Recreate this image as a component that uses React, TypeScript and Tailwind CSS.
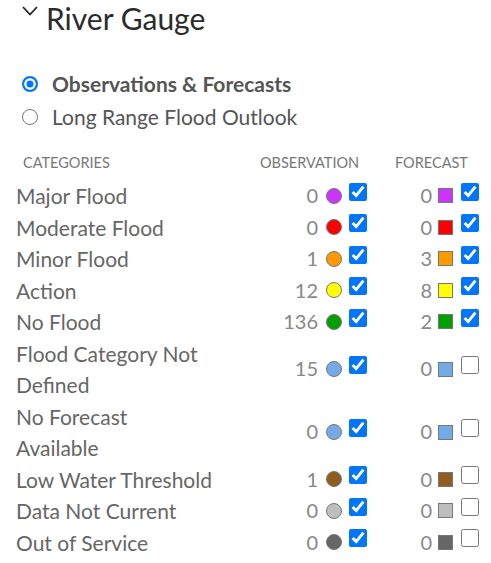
interface Category {
  name: string[];
  obsCount: number;
  fcstCount: number;
  color: string;
  obsOn: boolean;
  fcstOn: boolean;
}

const categories: Category[] = [
  { name: ['Major Flood'], obsCount: 0, fcstCount: 0, color: 'bg-[#cc33ff]', obsOn: true, fcstOn: true },
  { name: ['Moderate Flood'], obsCount: 0, fcstCount: 0, color: 'bg-[#ff0000]', obsOn: true, fcstOn: true },
  { name: ['Minor Flood'], obsCount: 1, fcstCount: 3, color: 'bg-[#ff9900]', obsOn: true, fcstOn: true },
  { name: ['Action'], obsCount: 12, fcstCount: 8, color: 'bg-[#ffff00]', obsOn: true, fcstOn: true },
  { name: ['No Flood'], obsCount: 136, fcstCount: 2, color: 'bg-[#00a000]', obsOn: true, fcstOn: true },
  { name: ['Flood Category Not', 'Defined'], obsCount: 15, fcstCount: 0, color: 'bg-[#72abe8]', obsOn: true, fcstOn: false },
  { name: ['No Forecast', 'Available'], obsCount: 0, fcstCount: 0, color: 'bg-[#72abe8]', obsOn: true, fcstOn: false },
  { name: ['Low Water Threshold'], obsCount: 1, fcstCount: 0, color: 'bg-[#8f5e1e]', obsOn: true, fcstOn: false },
  { name: ['Data Not Current'], obsCount: 0, fcstCount: 0, color: 'bg-[#bdbfbc]', obsOn: true, fcstOn: false },
  { name: ['Out of Service'], obsCount: 0, fcstCount: 0, color: 'bg-[#666666]', obsOn: true, fcstOn: false },
];

const radioClass =
  'm-0 h-[16px] w-[16px] appearance-none rounded-full border-[1.5px] border-[#767676] bg-white checked:border-2 checked:border-[#0075ff] checked:bg-[#0075ff] checked:shadow-[inset_0_0_0_2.5px_white]';

export default function App() {
  return (
    <div className="w-[491px] min-h-[563px] bg-white text-[#666] font-['Lato','Liberation_Sans',sans-serif]">
      {/* Title */}
      <div className="flex h-[36px] items-center pl-[21px]">
        <svg width="18" height="12" viewBox="0 0 18 12" className="mb-[14px] mr-[7px]">
          <polyline points="2,2 9,9.5 16,2" fill="none" stroke="#222" strokeWidth="1.8" />
        </svg>
        <h2 className="text-[30px] leading-[36px] text-[#2b2b2b]">River Gauge</h2>
      </div>

      {/* View selector */}
      <div className="mt-[31px] flex flex-col pl-[22px]">
        <label className="flex h-[33px] items-center gap-[14px]">
          <input type="radio" name="view" defaultChecked className={radioClass} />
          <span className="text-[21px] font-bold text-[#555]">Observations &amp; Forecasts</span>
        </label>
        <label className="flex h-[33px] items-center gap-[14px]">
          <input type="radio" name="view" className={radioClass} />
          <span className="text-[21px] text-[#555]">Long Range Flood Outlook</span>
        </label>
      </div>

      {/* Category table */}
      <div className="mt-[12px] pl-[16px]">
        <div className="flex h-[35px] items-center text-[14.5px] uppercase text-[#777]">
          <div className="w-[232px] pl-[7px]">Categories</div>
          <div className="w-[119px] pl-[12px]">Observation</div>
          <div className="w-[112px] pl-[28px]">Forecast</div>
        </div>

        {categories.map((c, i) => (
          <div key={i} className="flex items-center text-[21px] leading-[31.5px]">
            <div className="w-[232px]">
              {c.name.map((line) => (
                <div key={line}>{line}</div>
              ))}
            </div>
            <div className="flex w-[119px] items-center justify-end">
              <span className="text-[20px] text-[#888]">{c.obsCount}</span>
              <span className={`ml-[8px] h-[16px] w-[16px] rounded-full border border-[#777] ${c.color}`} />
              <input
                type="checkbox"
                defaultChecked={c.obsOn}
                className="m-0 mb-[8px] ml-[7px] h-[18px] w-[18px]"
              />
            </div>
            <div className="flex w-[112px] items-center justify-end">
              <span className="text-[20px] text-[#888]">{c.fcstCount}</span>
              <span className={`ml-[6px] h-[15px] w-[15px] border border-[#777] ${c.color}`} />
              <input
                type="checkbox"
                defaultChecked={c.fcstOn}
                className="m-0 mb-[8px] ml-[8px] h-[18px] w-[18px]"
              />
            </div>
          </div>
        ))}
      </div>
    </div>
  );
}
